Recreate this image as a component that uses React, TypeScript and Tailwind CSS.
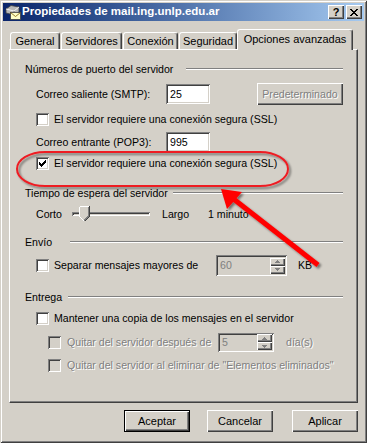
import React from "react";

const sunken =
  "shadow-[inset_1px_1px_#808080,inset_-1px_-1px_#ffffff,inset_2px_2px_#404040,inset_-2px_-2px_#d4d0c8]";
const raised =
  "shadow-[inset_1px_1px_#ffffff,inset_-1px_-1px_#404040,inset_-2px_-2px_#808080]";
const disabledText = "text-[#808080] [text-shadow:1px_1px_0_#ffffff]";

function Check({ checked, disabled }: { checked?: boolean; disabled?: boolean }) {
  return (
    <div
      className={`w-[13px] h-[13px] shrink-0 flex items-center justify-center ${
        disabled ? "bg-[#d4d0c8]" : "bg-white"
      } ${sunken}`}
    >
      {checked && (
        <svg width="7" height="7" viewBox="0 0 7 7" shapeRendering="crispEdges">
          <rect x="6" y="0" width="1" height="1" fill="#000" />
          <rect x="5" y="1" width="2" height="1" fill="#000" />
          <rect x="0" y="2" width="1" height="1" fill="#000" />
          <rect x="4" y="2" width="3" height="1" fill="#000" />
          <rect x="0" y="3" width="2" height="1" fill="#000" />
          <rect x="3" y="3" width="3" height="1" fill="#000" />
          <rect x="0" y="4" width="5" height="1" fill="#000" />
          <rect x="1" y="5" width="3" height="1" fill="#000" />
          <rect x="2" y="6" width="1" height="1" fill="#000" />
        </svg>
      )}
    </div>
  );
}

function Header({ label, w }: { label: string; w: string }) {
  return (
    <div className="flex items-center h-[20px] pl-[15px] pr-[14px]">
      <span className={`${w} whitespace-nowrap`}>{label}</span>
      <div className="flex-1 h-[2px] border-t border-t-[#808080] border-b border-b-white" />
    </div>
  );
}

function SpinBtn({ up }: { up?: boolean }) {
  return (
    <div className={`w-[15px] h-[8px] bg-[#d4d0c8] ${raised} flex items-center justify-center`}>
      <svg width="5" height="3" viewBox="0 0 5 3" shapeRendering="crispEdges">
        {up ? (
          <path d="M2 0h1v1h1v1h1v1H0V2h1V1h1z" fill="#808080" />
        ) : (
          <path d="M0 0h5v1H4v1H3v1H2V2H1V1H0z" fill="#808080" />
        )}
      </svg>
    </div>
  );
}

function Spin({ value, w, h }: { value: string; w: string; h: string }) {
  return (
    <div className={`${w} ${h} bg-[#d4d0c8] ${sunken} flex items-center justify-between pl-[4px] pr-[2px]`}>
      <span className="text-[#808080]">{value}</span>
      <div className="flex flex-col">
        <SpinBtn up />
        <SpinBtn />
      </div>
    </div>
  );
}

function Tab({ label, w }: { label: string; w: string }) {
  return (
    <div
      className={`${w} h-[17px] flex items-center justify-center border-l border-t border-white border-r border-r-[#404040] rounded-t-[3px] shadow-[inset_-1px_0_#808080] whitespace-nowrap`}
    >
      {label}
    </div>
  );
}

function Btn({ label, def }: { label: string; def?: boolean }) {
  return (
    <div className={`w-[66px] h-[22px] ${def ? "border border-black" : ""}`}>
      <div className={`w-full h-full flex items-center justify-center bg-[#d4d0c8] ${raised}`}>{label}</div>
    </div>
  );
}

export default function App() {
  return (
    <div className="relative w-[367px] h-[443px] bg-[#d4d0c8] shadow-[inset_1px_1px_#d4d0c8,inset_-1px_-1px_#404040,inset_2px_2px_#ffffff,inset_-2px_-2px_#808080] p-[3px] font-['Liberation_Sans',Arial,sans-serif] text-[10.6px] text-black overflow-hidden leading-none">
      {/* Title bar */}
      <div className="h-[18px] flex items-center bg-gradient-to-r from-[#0a246a] to-[#a6caf0] pl-[2px] pr-[2px]">
        <svg width="16" height="16" viewBox="0 0 16 16" className="shrink-0">
          <path d="M1 5 L6 1.5 L14 3 L14 8 L9 11 L1 9 Z" fill="#b8b8b8" stroke="#404040" strokeWidth="0.8" />
          <path d="M1 5 L9 7 L14 3" fill="none" stroke="#ffffff" strokeWidth="0.8" />
          <path d="M9 7 L9 11" stroke="#606060" strokeWidth="0.8" />
          <rect x="5.5" y="8.5" width="10" height="7" fill="#ffffc8" stroke="#404040" strokeWidth="0.8" />
          <path d="M5.5 8.5 L10.5 12.5 L15.5 8.5" fill="none" stroke="#806000" strokeWidth="0.8" />
        </svg>
        <span className="ml-[1px] text-white font-bold text-[11.5px] whitespace-nowrap">
          Propiedades de mail.ing.unlp.edu.ar
        </span>
        <div className="flex-1" />
        <div className={`w-[16px] h-[14px] bg-[#d4d0c8] ${raised} flex items-center justify-center font-bold text-[11px]`}>
          ?
        </div>
        <div className={`ml-[2px] w-[16px] h-[14px] bg-[#d4d0c8] ${raised} flex items-center justify-center`}>
          <svg width="8" height="7" viewBox="0 0 8 7" shapeRendering="crispEdges">
            <path d="M0 0h2v1h1v1h2V1h1V0h2v1H7v1H6v1H5v1h1v1h1v1h1v1H6V6H5V5H3v1H2v1H0V6h1V5h1V4h1V3H2V2H1V1H0z" fill="#000" />
          </svg>
        </div>
      </div>

      {/* Tabs */}
      <div className="mt-[8px] h-[20px] flex items-end pl-[7px] text-[11px]">
        <Tab label="General" w="w-[50px]" />
        <div className="w-[1px]" />
        <Tab label="Servidores" w="w-[61px]" />
        <div className="w-[1px]" />
        <Tab label="Conexión" w="w-[55px]" />
        <div className="w-[1px]" />
        <Tab label="Seguridad" w="w-[58px]" />
        <div className="relative z-10 -mb-[1px] w-[116px] h-[21px] bg-[#d4d0c8] flex items-center justify-center border-l border-t border-white border-r border-r-[#404040] rounded-t-[3px] shadow-[inset_-1px_0_#808080] whitespace-nowrap pb-[2px]">
          Opciones avanzadas
        </div>
      </div>

      {/* Panel */}
      <div className="ml-[6px] w-[349px] h-[354px] border-l border-t border-white border-r border-b border-r-[#404040] border-b-[#404040] shadow-[inset_-1px_-1px_#808080] pt-[9px]">
        <Header label="Números de puerto del servidor" w="w-[161px]" />

        <div className="mt-[5px] h-[20px] flex items-center pl-[26px]">
          <span className="w-[130px] whitespace-nowrap">Correo saliente (SMTP):</span>
          <div className={`w-[44px] h-[20px] bg-white ${sunken} flex items-center pl-[4px]`}>25</div>
          <div className={`ml-[47px] w-[86px] h-[22px] bg-[#d4d0c8] ${raised} flex items-center justify-center ${disabledText}`}>
            Predeterminado
          </div>
        </div>

        <div className="mt-[5px] h-[20px] flex items-center pl-[26px]">
          <Check />
          <span className="ml-[5px] whitespace-nowrap">El servidor requiere una conexión segura (SSL)</span>
        </div>

        <div className="mt-[3px] h-[20px] flex items-center pl-[26px]">
          <span className="w-[130px] whitespace-nowrap">Correo entrante (POP3):</span>
          <div className={`w-[44px] h-[20px] bg-white ${sunken} flex items-center pl-[4px]`}>995</div>
        </div>

        <div className="mt-[1px] h-[20px] flex items-center pl-[26px]">
          <Check checked />
          <span className="ml-[5px] whitespace-nowrap">El servidor requiere una conexión segura (SSL)</span>
        </div>

        <div className="mt-[10px]">
          <Header label="Tiempo de espera del servidor" w="w-[148px]" />
        </div>

        <div className="mt-[1px] h-[20px] flex items-center pl-[26px]">
          <span className="w-[36px]">Corto</span>
          <div className="relative w-[78px] h-[20px] flex items-center">
            <div className={`w-full h-[4px] bg-[#d4d0c8] ${sunken}`} />
            <svg className="absolute left-[7px] top-[2px]" width="11" height="15" viewBox="0 0 11 15" shapeRendering="crispEdges">
              <path d="M0 0h10v10l-5 5-5-5z" fill="#d4d0c8" />
              <path d="M0.5 0.5H9.5" fill="none" stroke="#ffffff" strokeWidth="1" />
              <path d="M0.5 0.5V10.5L5 15" fill="none" stroke="#ffffff" strokeWidth="1" />
              <path d="M9.5 0.5V10L5 14.5" fill="none" stroke="#808080" strokeWidth="1" />
              <path d="M10.5 0V10.5L5.5 15.5" fill="none" stroke="#404040" strokeWidth="1" />
            </svg>
          </div>
          <span className="ml-[12px] w-[46px]">Largo</span>
          <span className="whitespace-nowrap">1 minuto</span>
        </div>

        <div className="mt-[8px]">
          <Header label="Envío" w="w-[45px]" />
        </div>

        <div className="mt-[3px] h-[21px] flex items-center pl-[26px]">
          <Check />
          <span className="ml-[5px] w-[162px] whitespace-nowrap">Separar mensajes mayores de</span>
          <Spin value="60" w="w-[71px]" h="h-[21px]" />
          <span className="ml-[11px]">KB</span>
        </div>

        <div className="mt-[11px]">
          <Header label="Entrega" w="w-[43px]" />
        </div>

        <div className="mt-[1px] h-[20px] flex items-center pl-[26px]">
          <Check />
          <span className="ml-[5px] whitespace-nowrap">Mantener una copia de los mensajes en el servidor</span>
        </div>

        <div className="mt-[4px] h-[20px] flex items-center pl-[38px]">
          <Check disabled />
          <span className={`ml-[6px] w-[151px] whitespace-nowrap ${disabledText}`}>Quitar del servidor después de</span>
          <Spin value="5" w="w-[56px]" h="h-[19px]" />
          <span className={`ml-[12px] ${disabledText}`}>día(s)</span>
        </div>

        <div className="mt-[3px] h-[20px] flex items-center pl-[38px]">
          <Check disabled />
          <span className={`ml-[6px] whitespace-nowrap ${disabledText}`}>
            Quitar del servidor al eliminar de "Elementos eliminados"
          </span>
        </div>
      </div>

      {/* Buttons */}
      <div className="mt-[7px] flex justify-end pr-[6px] text-[11px]">
        <Btn label="Aceptar" def />
        <div className="w-[17px]" />
        <Btn label="Cancelar" />
        <div className="w-[19px]" />
        <Btn label="Aplicar" />
      </div>

      {/* Annotation overlay */}
      <svg className="absolute left-0 top-0 pointer-events-none" width="367" height="443" viewBox="0 0 367 443">
        <defs>
          <filter id="sh" x="-10%" y="-10%" width="130%" height="140%">
            <feDropShadow dx="2" dy="2" stdDeviation="1.2" floodColor="#000" floodOpacity="0.45" />
          </filter>
        </defs>
        <rect x="17" y="152" width="271" height="34" rx="28" ry="17" fill="none" stroke="#ee1c24" strokeWidth="2" filter="url(#sh)" />
        <g filter="url(#sh)">
          <line x1="318" y1="265" x2="231" y2="197" stroke="#ff0000" strokeWidth="5" />
          <polygon points="221,189 242,192 227,209" fill="#ff0000" />
        </g>
      </svg>
    </div>
  );
}
